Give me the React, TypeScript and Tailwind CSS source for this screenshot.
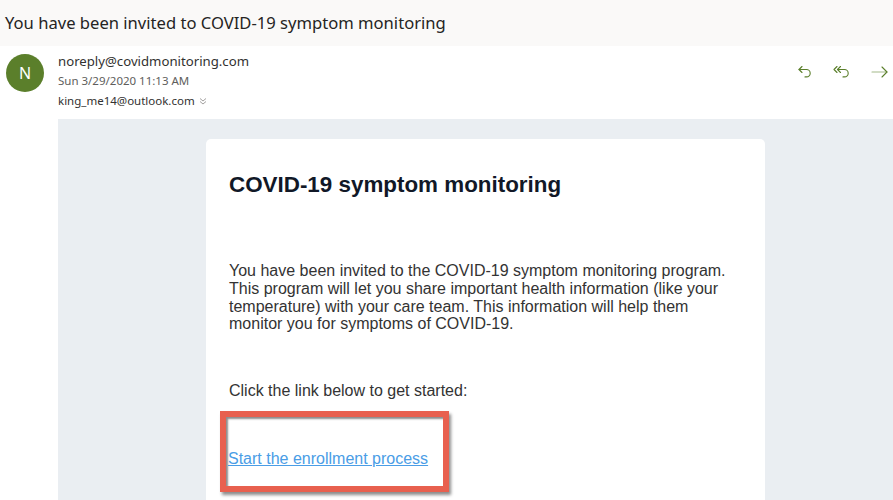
const sans = { fontFamily: '"Noto Sans", "Open Sans", sans-serif' };
const arial = { fontFamily: '"Liberation Sans", Arial, sans-serif' };

function ReplyIcon() {
    return (
        <svg width="16" height="16" viewBox="0 0 16 16" fill="none" stroke="#5b7f2b" strokeWidth="1.1" strokeLinecap="round" strokeLinejoin="round">
            <path d="M5 2.5 L2 5.5 L5 8.5" />
            <path d="M2 5.5 H9.5 a3.7 3.7 0 0 1 0 7.4 H8" />
        </svg>
    );
}

function ReplyAllIcon() {
    return (
        <svg width="18" height="16" viewBox="0 0 18 16" fill="none" stroke="#5b7f2b" strokeWidth="1.1" strokeLinecap="round" strokeLinejoin="round">
            <path d="M4 2.5 L1 5.5 L4 8.5" />
            <path d="M7.5 2.5 L4.5 5.5 L7.5 8.5" />
            <path d="M4.5 5.5 H11.5 a3.7 3.7 0 0 1 0 7.4 H10" />
        </svg>
    );
}

function ForwardIcon() {
    return (
        <svg width="18" height="16" viewBox="0 0 18 16" fill="none" strokeWidth="1.1" strokeLinecap="round" strokeLinejoin="round">
            <path d="M1 8 H16" stroke="#a3b98a" />
            <path d="M11 3 L16 8 L11 13" stroke="#5b7f2b" />
        </svg>
    );
}

export default function App() {
    return (
        <div className="w-[893px] h-[500px] overflow-hidden bg-white">
            {/* Subject bar */}
            <div className="h-[46px] bg-[#faf9f8] flex items-center pl-[5px]" style={sans}>
                <h1 className="text-[16.6px] text-[#252423]">You have been invited to COVID-19 symptom monitoring</h1>
            </div>

            {/* Sender row */}
            <div className="flex h-[73px]">
                <div className="w-[58px] shrink-0 pt-[8px] pl-[6px]">
                    <div className="w-[38px] h-[38px] rounded-full bg-[#5b7f2b] flex items-center justify-center text-white text-[16px]" style={sans}>
                        N
                    </div>
                </div>
                <div className="flex-1 pt-[6px]" style={sans}>
                    <div className="text-[13.2px] leading-[18px] text-[#323130]">noreply@covidmonitoring.com</div>
                    <div className="text-[11.5px] leading-[16px] mt-[3px] text-[#605e5c]">Sun 3/29/2020 11:13 AM</div>
                    <div className="text-[11.5px] leading-[16px] mt-[4px] text-[#323130] flex items-center gap-[4px]">
                        king_me14@outlook.com
                        <svg width="8" height="8" viewBox="0 0 8 8" fill="none" stroke="#8a8886" strokeWidth="0.8">
                            <path d="M1 1.5 L4 4 L7 1.5" />
                            <path d="M1 4.5 L4 7 L7 4.5" />
                        </svg>
                    </div>
                </div>
                <div className="flex items-start pt-[18px] pr-[4px] gap-[20px]">
                    <ReplyIcon />
                    <ReplyAllIcon />
                    <ForwardIcon />
                </div>
            </div>

            {/* Message body */}
            <div className="ml-[58px] h-[381px] bg-[#eaeef2] pt-[20px] pl-[148px]">
                <div className="w-[559px] h-[400px] bg-white rounded-[5px] pt-[33px]" style={arial}>
                    <h2 className="pl-[23px] text-[22.4px] leading-[26px] font-bold text-[#111827]">COVID-19 symptom monitoring</h2>
                    <p className="pl-[23px] mt-[64px] text-[16px] leading-[17.8px] text-[#333] whitespace-nowrap">
                        You have been invited to the COVID-19 symptom monitoring program.
                        <br />
                        This program will let you share important health information (like your
                        <br />
                        temperature) with your care team. This information will help them
                        <br />
                        monitor you for symptoms of COVID-19.
                    </p>
                    <p className="pl-[23px] mt-[49px] text-[16px] leading-[18px] text-[#333]">Click the link below to get started:</p>
                    <div className="ml-[14px] mt-[11px] w-[229px] h-[81px] border-[6px] border-[#e8604f] shadow-[2px_3px_3px_rgba(0,0,0,0.45),inset_2px_2px_2px_rgba(0,0,0,0.45)] pt-[30px] pl-[2px]">
                        <a href="#" className="text-[16px] leading-[18px] text-[#4a9de6] underline">Start the enrollment process</a>
                    </div>
                </div>
            </div>
        </div>
    );
}
